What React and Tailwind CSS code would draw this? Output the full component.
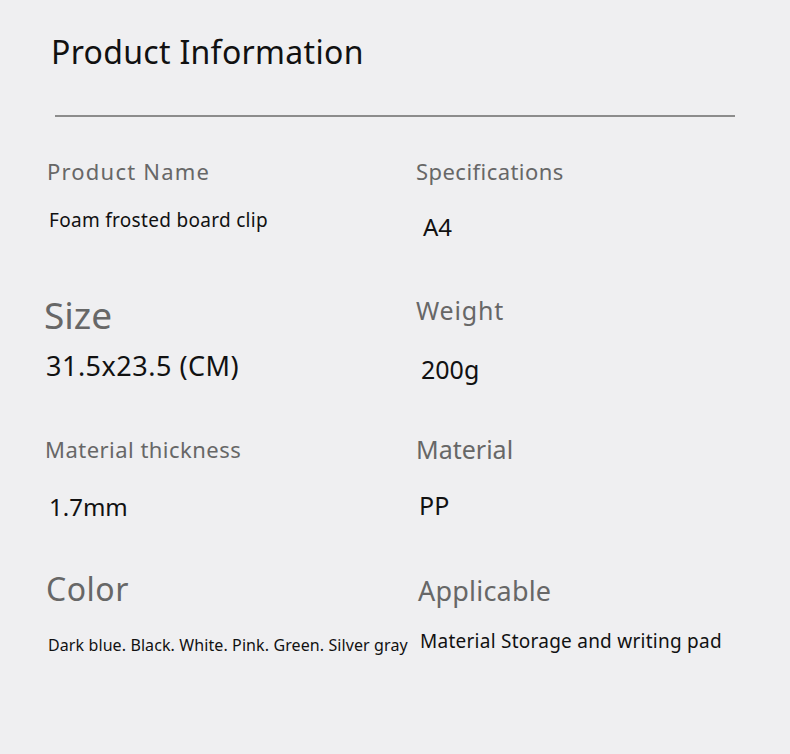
export default function App() {
  const font = { fontFamily: '"Noto Sans", "Open Sans", sans-serif' };
  return (
    <div className="w-[790px] h-[754px] bg-[#efeff1] overflow-hidden" style={font}>
      <div className="pt-[32px] pl-[51px] text-[32px] leading-[40px] tracking-[0.3px] text-[#111]">Product Information</div>
      <div className="mt-[43px] ml-[55px] w-[680px] h-[2px] bg-[#8c8c8c]" />
      {/* Row 1 */}
      <div className="grid grid-cols-[370px_1fr] h-[163px]">
        <div className="pl-[47px]">
          <div className="mt-[39px] text-[22px] leading-[30px] tracking-[1.2px] text-[#676767]">Product Name</div>
          <div className="mt-[19px] ml-[2px] text-[19px] leading-[30px] tracking-[0.3px] text-[#111]">Foam frosted board clip</div>
        </div>
        <div>
          <div className="mt-[39px] ml-[46px] text-[22px] leading-[30px] tracking-[0.45px] text-[#676767]">Specifications</div>
          <div className="mt-[26px] ml-[53px] text-[24px] leading-[30px] text-[#111]">A4</div>
        </div>
      </div>
      {/* Row 2 */}
      <div className="grid grid-cols-[370px_1fr] h-[140px]">
        <div>
          <div className="mt-[13px] ml-[44px] text-[37px] leading-[44px] text-[#676767]">Size</div>
          <div className="mt-[12px] ml-[46px] text-[27px] leading-[34px] tracking-[0.5px] text-[#111]">31.5x23.5 (CM)</div>
        </div>
        <div>
          <div className="mt-[14px] ml-[46px] text-[25px] leading-[32px] tracking-[0.8px] text-[#676767]">Weight</div>
          <div className="mt-[27px] ml-[51px] text-[25px] leading-[32px] text-[#111]">200g</div>
        </div>
      </div>
      {/* Row 3 */}
      <div className="grid grid-cols-[370px_1fr] h-[140px]">
        <div>
          <div className="mt-[14px] ml-[45px] text-[22px] leading-[30px] tracking-[0.47px] text-[#676767]">Material thickness</div>
          <div className="mt-[27px] ml-[49px] text-[24px] leading-[32px] text-[#111]">1.7mm</div>
        </div>
        <div>
          <div className="mt-[13px] ml-[46px] text-[25px] leading-[32px] text-[#676767]">Material</div>
          <div className="mt-[24px] ml-[49px] text-[25px] leading-[32px] text-[#111]">PP</div>
        </div>
      </div>
      {/* Row 4 */}
      <div className="grid grid-cols-[370px_1fr] h-[140px]">
        <div>
          <div className="mt-[9px] ml-[46px] text-[32px] leading-[40px] tracking-[0.5px] text-[#676767]">Color</div>
          <div className="mt-[24px] ml-[48px] text-[16px] leading-[24px] tracking-[0.1px] text-[#111] whitespace-nowrap">Dark blue. Black. White. Pink. Green. Silver gray</div>
        </div>
        <div>
          <div className="mt-[13px] ml-[48px] text-[27px] leading-[36px] tracking-[0.2px] text-[#676767]">Applicable</div>
          <div className="mt-[18px] ml-[50px] text-[19px] leading-[28px] tracking-[0.25px] text-[#111] whitespace-nowrap">Material Storage and writing pad</div>
        </div>
      </div>
    </div>
  );
}
